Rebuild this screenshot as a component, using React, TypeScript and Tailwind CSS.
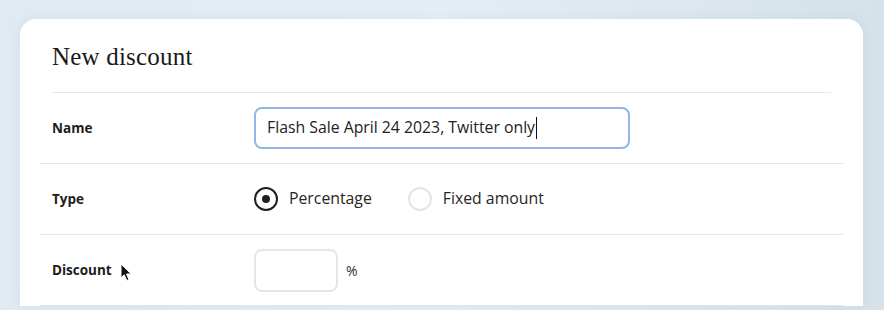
import { ReactNode } from 'react'

const sans = "font-['Open_Sans','Noto_Sans',sans-serif]"

function Row({ label, children, cursor }: { label: string; children: ReactNode; cursor?: boolean }) {
  return (
    <div className="grid h-[71px] grid-cols-[214px_1fr] items-center border-b border-[#e6e7e9]">
      <div className="relative pl-3 text-[13.5px] font-bold text-[#1c1c1c]">
        {label}
        {cursor && (
          <svg
            className="absolute left-[80px] top-[3px]"
            width="13"
            height="19"
            viewBox="0 0 13 19"
          >
            <path d="M1 1 L1 15 L4.2 11.8 L6.8 17.6 L9 16.6 L6.5 11 L11.2 11 Z" fill="#111" stroke="#fff" strokeWidth="1" />
          </svg>
        )}
      </div>
      <div className="flex items-center">{children}</div>
    </div>
  )
}

function Radio({ checked, label }: { checked?: boolean; label: string }) {
  return (
    <label className="mr-[36px] flex items-center gap-[11px] text-[15.8px] text-[#262626]">
      <span
        className={`flex h-6 w-6 items-center justify-center rounded-full border-2 ${
          checked ? 'border-[#1f1f1f]' : 'border-[#e4e4e4]'
        }`}
      >
        {checked && <span className="h-2 w-2 rounded-full bg-[#1f1f1f]" />}
      </span>
      {label}
    </label>
  )
}

export default function App() {
  return (
    <div className={`h-[310px] w-[884px] overflow-hidden bg-gradient-to-r from-[#e1eaf2] via-[#e5edf4] to-[#d5e2ea] pt-[19px] pl-5 ${sans}`}>
      <div className="w-[843px] rounded-t-2xl bg-white px-5 shadow-[0_0_12px_rgba(120,150,180,0.12)]">
        <div className="mx-3 h-[74px] border-b border-[#e6e7e9] pt-[23px]">
          <h1 className="font-['Liberation_Serif',serif] text-[25px] leading-[30px] tracking-[0.2px] text-[#1a1a1a]">
            New discount
          </h1>
        </div>

        <Row label="Name">
          <div className="flex h-[42px] w-[376px] items-center rounded-lg border-2 border-[#92b6ea] px-[11px] text-[15.8px] text-[#222]">
            Flash Sale April 24 2023, Twitter only
            <span className="ml-px h-[22px] w-px bg-[#111]" />
          </div>
        </Row>

        <Row label="Type">
          <Radio checked label="Percentage" />
          <Radio label="Fixed amount" />
        </Row>

        <Row label="Discount" cursor>
          <div className="h-[43px] w-[84px] rounded-lg border-2 border-[#e6e6e6]" />
          <span className="ml-2 text-[14px] text-[#333]">%</span>
        </Row>
      </div>
    </div>
  )
}
